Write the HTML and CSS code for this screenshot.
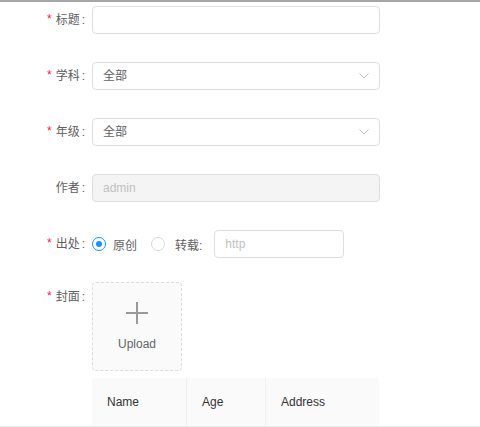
FILE: index.html
```html
<!DOCTYPE html>
<html lang="zh">
<head>
<meta charset="utf-8">
<link rel="stylesheet" href="styles.css">
</head>
<body>
<div class="topbar"></div>
<form class="form">
  <div class="item">
    <label class="label"><span class="req">*</span>标题<span class="colon">:</span></label>
    <div class="control"><div class="input"></div></div>
  </div>
  <div class="item">
    <label class="label"><span class="req">*</span>学科<span class="colon">:</span></label>
    <div class="control">
      <div class="input select"><span>全部</span>
        <svg class="arrow" width="10" height="6" viewBox="0 0 10 6"><path d="M0.5 0.5 L5 5 L9.5 0.5" fill="none" stroke="#c4c4c4" stroke-width="1"/></svg>
      </div>
    </div>
  </div>
  <div class="item">
    <label class="label"><span class="req">*</span>年级<span class="colon">:</span></label>
    <div class="control">
      <div class="input select"><span>全部</span>
        <svg class="arrow" width="10" height="6" viewBox="0 0 10 6"><path d="M0.5 0.5 L5 5 L9.5 0.5" fill="none" stroke="#c4c4c4" stroke-width="1"/></svg>
      </div>
    </div>
  </div>
  <div class="item">
    <label class="label">作者<span class="colon">:</span></label>
    <div class="control"><div class="input disabled">admin</div></div>
  </div>
  <div class="item item-source">
    <label class="label"><span class="req">*</span>出处<span class="colon">:</span></label>
    <div class="control radios">
      <span class="radio checked"></span><span class="radio-text first">原创</span>
      <span class="radio"></span><span class="radio-text second">转载:</span>
      <div class="input url">http</div>
    </div>
  </div>
  <div class="item item-upload">
    <label class="label label-top"><span class="req">*</span>封面<span class="colon">:</span></label>
    <div class="control">
      <div class="upload">
        <svg width="22" height="22" viewBox="0 0 22 22"><path d="M11 0 V22 M0 11 H22" stroke="#999" stroke-width="2"/></svg>
        <span class="upload-text">Upload</span>
      </div>
    </div>
  </div>
  <div class="item item-table">
    <div class="table">
      <div class="th th-name">Name</div>
      <div class="th th-age">Age</div>
      <div class="th th-addr">Address</div>
    </div>
  </div>
</form>
<div class="bottom-line"></div>
</body>
</html>
```
FILE: styles.css
```css
html, body {
  margin: 0;
  padding: 0;
  background: #fff;
}
body {
  width: 480px;
  height: 427px;
  overflow: hidden;
  font-family: "Liberation Sans", "Noto Sans CJK SC", sans-serif;
  font-size: 12px;
  color: #606060;
}
.topbar {
  height: 2px;
  background: #a6a6a6;
}
.form {
  padding-top: 4px;
}
.item {
  display: flex;
  align-items: center;
  margin-bottom: 28px;
}
.label {
  width: 92px;
  flex: none;
  box-sizing: border-box;
  padding-right: 7px;
  text-align: right;
  color: #606060;
  line-height: 28px;
  white-space: nowrap;
}
.req {
  color: #f5222d;
  margin-right: 4px;
  font-size: 12px;
  position: relative;
  top: -1px;
}
.colon {
  margin-left: 2px;
}
.control {
  width: 288px;
}
.input {
  box-sizing: border-box;
  height: 28px;
  border: 1px solid #dedede;
  border-radius: 4px;
  background: #fff;
  padding: 0 10px;
  line-height: 26px;
}
.select {
  display: flex;
  align-items: center;
  justify-content: space-between;
  color: #606060;
}
.disabled {
  background: #f4f4f4;
  color: #bfbfbf;
}
.item-source {
  margin-bottom: 24px;
}
.radios {
  display: flex;
  align-items: center;
}
.radio {
  box-sizing: border-box;
  width: 14px;
  height: 14px;
  border-radius: 50%;
  border: 1px solid #d9d9d9;
  flex: none;
  position: relative;
}
.radio.checked {
  border-color: #1890ff;
}
.radio.checked::after {
  content: "";
  position: absolute;
  left: 3px;
  top: 3px;
  width: 6px;
  height: 6px;
  border-radius: 50%;
  background: #1890ff;
}
.radio-text.first {
  margin-left: 7px;
  margin-right: 14px;
}
.radio-text.second {
  margin-left: 10px;
  margin-right: 12px;
}
.url {
  width: 130px;
  color: #bfbfbf;
}
.item-upload {
  align-items: flex-start;
  margin-bottom: 7px;
}
.label-top {
  line-height: 30px;
}
.upload {
  box-sizing: border-box;
  width: 90px;
  height: 89px;
  border: 1px dashed #dcdcdc;
  border-radius: 4px;
  background: #fafafa;
  display: flex;
  flex-direction: column;
  align-items: center;
  padding-top: 19px;
}
.upload-text {
  margin-top: 12px;
  line-height: 16px;
  color: #666;
}
.item-table {
  margin: 0 0 0 92px;
}
.table {
  display: flex;
  width: 287px;
  height: 48px;
  background: #fafafa;
  border-radius: 4px 4px 0 0;
  color: #333;
}
.th {
  box-sizing: border-box;
  padding-left: 15px;
  line-height: 48px;
}
.th-name {
  width: 95px;
  border-right: 1px solid #efefef;
}
.th-age {
  width: 79px;
  border-right: 1px solid #efefef;
}
.th-addr {
  flex: 1;
}
.bottom-line {
  height: 1px;
  background: #ebebeb;
}
```
